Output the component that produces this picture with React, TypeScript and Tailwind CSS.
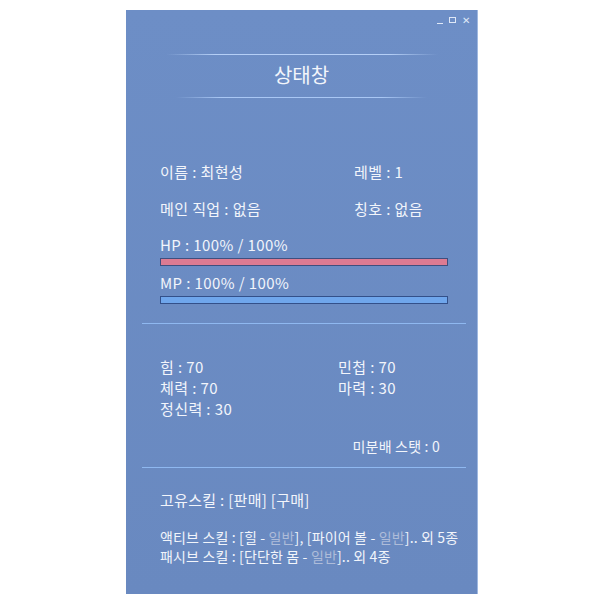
import type { ReactNode } from 'react'

const font = { fontFamily: '"Noto Sans CJK KR", "Noto Sans", sans-serif' }

function Divider({ className }: { className: string }) {
  return <div className={className} />
}

function Bar({ fill, edge }: { fill: string; edge: string }) {
  return (
    <div className={`h-[8px] w-[288px] border ${edge} ${fill}`} />
  )
}

function Row({ left, right, col }: { left: ReactNode; right: ReactNode; col: string }) {
  return (
    <div className="flex">
      <span className={col}>{left}</span>
      <span>{right}</span>
    </div>
  )
}

function Grade() {
  return <span className="text-[#aebcd9]">일반</span>
}

export default function App() {
  return (
    <div className="w-[600px] h-[600px] bg-white pt-[10px] pl-[126px]" style={font}>
      <div className="w-[352px] h-[584px] bg-gradient-to-b from-[#6d8ec6] to-[#6989c0] border-r border-[#9fb8e0] text-[#f2f5fb] flex flex-col">
        {/* window controls */}
        <div className="h-[20px] flex items-center justify-end gap-[6px] pr-[7px] text-[#dfe8f7]">
          <span className="w-[6px] h-[1px] bg-[#dfe8f7] mt-[6px]" />
          <span className="w-[7px] h-[6px] border border-[#dfe8f7]" />
          <span className="text-[10px] leading-none">✕</span>
        </div>

        <Divider className="mt-[24px] ml-[40px] mr-[39px] h-[1px] bg-[linear-gradient(90deg,transparent,#b5cff6_18%,#b5cff6_82%,transparent)]" />
        <div className="mt-[6px] mb-[8px] text-center text-[20px] leading-[28px]">상태창</div>
        <Divider className="mx-[50px] h-[1px] bg-[linear-gradient(90deg,transparent,#a9c7f4_18%,#a9c7f4_82%,transparent)]" />

        <div className="pl-[34px] text-[15px] leading-[22px] tracking-[0.4px]">
          <div className="mt-[63px]">
            <Row left="이름 : 최현성" right="레벨 : 1" col="w-[194px]" />
          </div>
          <div className="mt-[15px]">
            <Row left="메인 직업 : 없음" right="칭호 : 없음" col="w-[194px]" />
          </div>
          <div className="mt-[14px]">HP : 100% / 100%</div>
          <div className="mt-[2px]">
            <Bar fill="bg-[#dd7b92]" edge="border-[#3f4f7e]" />
          </div>
          <div className="mt-[6px]">MP : 100% / 100%</div>
          <div className="mt-[2px]">
            <Bar fill="bg-[#6fa6ec]" edge="border-[#33508a]" />
          </div>
        </div>

        <Divider className="mt-[19px] ml-[16px] mr-[11px] h-[1px] bg-[#8fb8f0]" />

        <div className="pl-[34px] pr-[37px] text-[15px] leading-[21px] tracking-[0.4px]">
          <div className="mt-[32px]">
            <Row left="힘 : 70" right="민첩 : 70" col="w-[178px]" />
            <Row left="체력 : 70" right="마력 : 30" col="w-[178px]" />
            <div>정신력 : 30</div>
          </div>
          <div className="mt-[17px] text-right text-[14px] tracking-[0.2px]">미분배 스탯 : 0</div>
        </div>

        <Divider className="mt-[10px] ml-[16px] mr-[11px] h-[1px] bg-[#8fb8f0]" />

        <div className="pl-[34px]">
          <div className="mt-[21px] text-[15px] leading-[22px] tracking-[0.3px]">고유스킬 : [판매] [구매]</div>
          <div className="mt-[17px] text-[14px] leading-[19px] tracking-[0.15px]">
            <div>
              액티브 스킬 : [힐 - <Grade />], [파이어 볼 - <Grade />].. 외 5종
            </div>
            <div>
              패시브 스킬 : [단단한 몸 - <Grade />].. 외 4종
            </div>
          </div>
        </div>
      </div>
    </div>
  )
}
